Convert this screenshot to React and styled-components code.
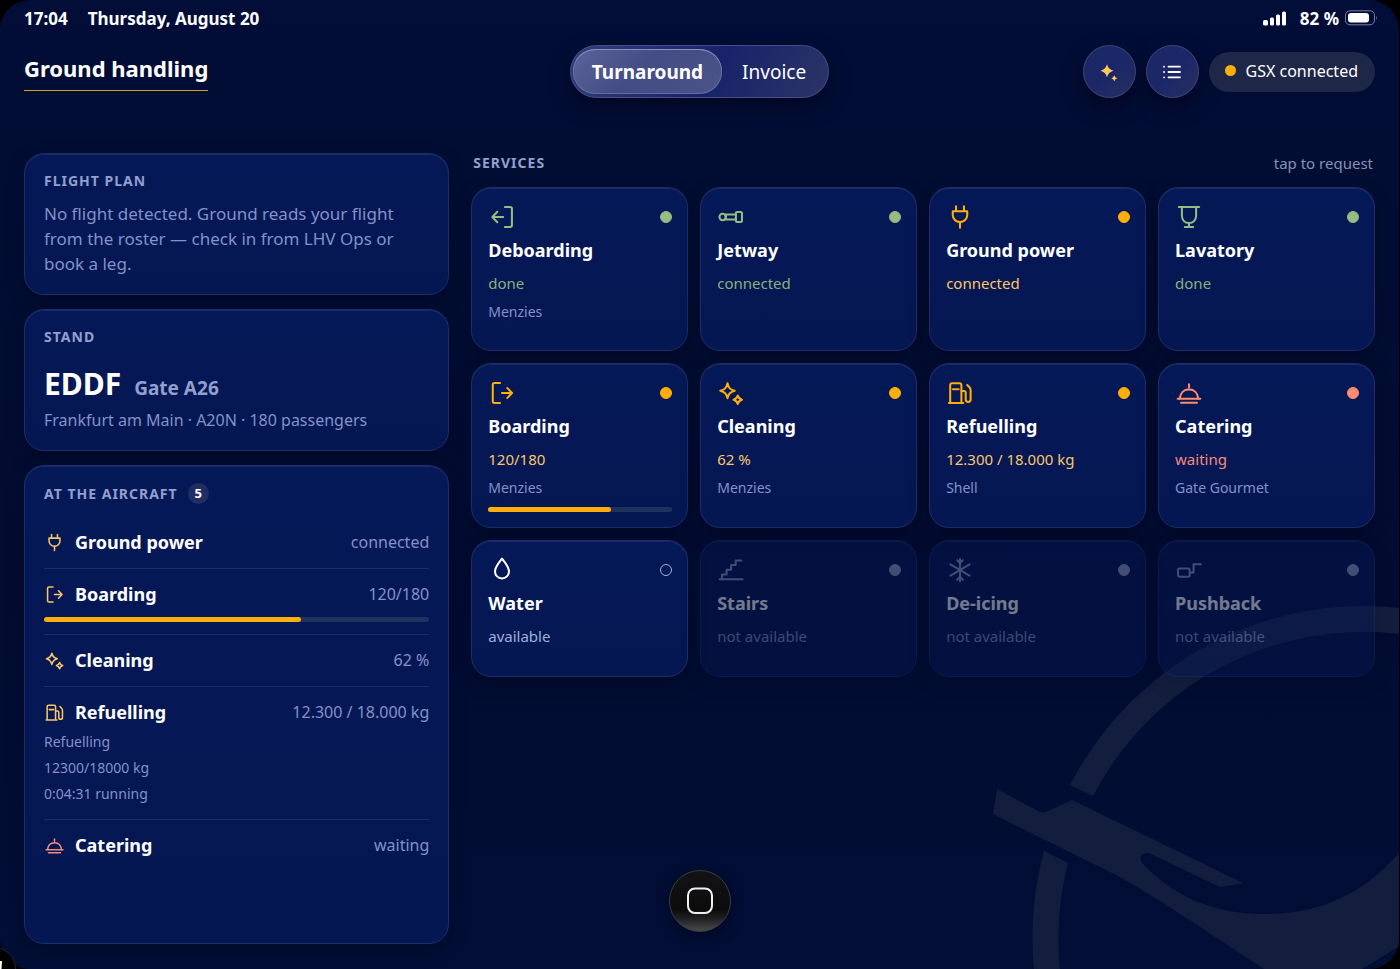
import React, { useState } from 'react';
import styled, { createGlobalStyle, css } from 'styled-components';

const tones = {
  done: { icon: '#97bb80', text: '#8ab07c' },
  active: { icon: '#ffae0a', text: '#f9c767' },
  waiting: { icon: '#ff8b70', text: '#f48b7c' },
  idle: { icon: '#ffffff', text: '#a3afdb' },
  off: { icon: '#8f9cc6', text: '#8291c6' },
};

const icons = {
  deboarding: (
    <>
      <path d="M14.5 3.4H19a1.5 1.5 0 0 1 1.5 1.5v14.2a1.5 1.5 0 0 1-1.5 1.5h-4.5" />
      <path d="M13 12H3.7M8 7.5 3.7 12 8 16.5" />
    </>
  ),
  boarding: (
    <>
      <path d="M10.3 3.4H5.6a1.5 1.5 0 0 0-1.5 1.5v14.2a1.5 1.5 0 0 0 1.5 1.5h4.7" />
      <path d="M12 12h8.5M16.6 7.8l4 4.2-4 4.2" />
    </>
  ),
  jetway: (
    <>
      <circle cx="4.8" cy="12" r="2.7" />
      <path d="M6.6 9.8h9.6M6.6 14.2h9.6M7.6 10v4" />
      <rect x="16.2" y="7.8" width="5.2" height="8.4" rx="1" />
    </>
  ),
  power: (
    <>
      <path d="M8.6 2.9v4M15.4 2.9v4M5.8 7h12.4v3.2a6.2 6.2 0 0 1-12.4 0z" />
      <path d="M12 16.4v4.8" />
    </>
  ),
  lavatory: (
    <>
      <path d="M3.3 3.4h17.4" />
      <path d="M5.9 3.6v6.8c0 4.2 2.6 6.8 6.1 6.8s6.1-2.6 6.1-6.8V3.6" />
      <path d="M12 17.2v3.2M8.4 20.5h7.2" />
    </>
  ),
  cleaning: (
    <>
      <path d="M9 3.7c.9 4 2.3 5.4 6.2 6.4-3.9 1-5.3 2.4-6.2 6.4-.9-4-2.3-5.4-6.2-6.4 3.9-1 5.3-2.4 6.2-6.4z" />
      <path d="M17.8 14.2c.6 2.2 1.4 3 3.6 3.6-2.2.6-3 1.4-3.6 3.6-.6-2.2-1.4-3-3.6-3.6 2.2-.6 3-1.4 3.6-3.6z" />
    </>
  ),
  fuel: (
    <>
      <path d="M3.6 20.5V5.2a1.6 1.6 0 0 1 1.6-1.6h6.4a1.6 1.6 0 0 1 1.6 1.6v15.3M2.5 20.6h12.3M6 8.7h4.9" />
      <path d="M13.3 10.2h2a1.6 1.6 0 0 1 1.6 1.6v5.8a2.1 2.1 0 0 0 4.2 0V9.4c0-1-.3-1.6-1-2.3l-1.9-1.9" />
    </>
  ),
  catering: (
    <>
      <path d="M2.3 16.9h19.4M5.2 20.4h13.6M12 4.5v2.6" />
      <path d="M4 16.8C4.5 12 7.6 8.9 12 8.9s7.5 3.1 8 7.9" />
    </>
  ),
  water: <path d="M12 2.3c3.2 4.1 6 7.3 6 10.9a6 6 0 0 1-12 0c0-3.6 2.8-6.8 6-10.9z" />,
  stairs: <path d="M2.3 19.9h19.6M4.3 19.7v-3.9h3.9v-4h3.9v-4H16v-4h4.9" />,
  deicing: (
    <>
      <path d="M12 2.6v18.8M3.8 7.2l16.4 9.6M20.2 7.2 3.8 16.8" />
      <path d="m9.6 3.7 2.4 2.4 2.4-2.4M9.6 20.3l2.4-2.4 2.4 2.4" />
    </>
  ),
  pushback: (
    <>
      <rect x="2.6" y="10.7" width="10" height="7" rx="1.2" />
      <path d="M12.7 14.2h3.2V7h6.2" />
    </>
  ),
};

const Icon = ({ name, size }) => (
  <svg
    width={size}
    height={size}
    viewBox="0 0 24 24"
    fill="none"
    stroke="currentColor"
    strokeWidth="1.75"
    strokeLinecap="round"
    strokeLinejoin="round"
    aria-hidden="true"
  >
    {icons[name]}
  </svg>
);

const services = [
  { name: 'Deboarding', icon: 'deboarding', tone: 'done', status: 'done', vendor: 'Menzies' },
  { name: 'Jetway', icon: 'jetway', tone: 'done', status: 'connected' },
  { name: 'Ground power', icon: 'power', tone: 'active', status: 'connected' },
  { name: 'Lavatory', icon: 'lavatory', tone: 'done', status: 'done' },
  { name: 'Boarding', icon: 'boarding', tone: 'active', status: '120/180', vendor: 'Menzies', progress: 66.6 },
  { name: 'Cleaning', icon: 'cleaning', tone: 'active', status: '62 %', vendor: 'Menzies' },
  { name: 'Refuelling', icon: 'fuel', tone: 'active', status: '12.300 / 18.000 kg', vendor: 'Shell' },
  { name: 'Catering', icon: 'catering', tone: 'waiting', status: 'waiting', vendor: 'Gate Gourmet' },
  { name: 'Water', icon: 'water', tone: 'idle', status: 'available' },
  { name: 'Stairs', icon: 'stairs', tone: 'off', status: 'not available' },
  { name: 'De-icing', icon: 'deicing', tone: 'off', status: 'not available' },
  { name: 'Pushback', icon: 'pushback', tone: 'off', status: 'not available' },
];

const activities = [
  { name: 'Ground power', icon: 'power', tone: 'active', status: 'connected' },
  { name: 'Boarding', icon: 'boarding', tone: 'active', status: '120/180', progress: 66.6 },
  { name: 'Cleaning', icon: 'cleaning', tone: 'active', status: '62 %' },
  {
    name: 'Refuelling',
    icon: 'fuel',
    tone: 'active',
    status: '12.300 / 18.000 kg',
    details: ['Refuelling', '12300/18000 kg', '0:04:31 running'],
  },
  { name: 'Catering', icon: 'catering', tone: 'waiting', status: 'waiting' },
];

const Progress = ({ value, label }) => (
  <Track role="progressbar" aria-label={label} aria-valuenow={Math.round(value)}>
    <Fill style={{ width: `${value}%` }} />
  </Track>
);

const ServiceCard = ({ service }) => (
  <Service type="button" disabled={service.tone === 'off'}>
    <ServiceTop $tone={service.tone}>
      <Icon name={service.icon} size={28} />
      <Dot $tone={service.tone} />
    </ServiceTop>
    <ServiceName>{service.name}</ServiceName>
    <ServiceStatus $tone={service.tone}>{service.status}</ServiceStatus>
    {service.vendor && <Vendor>{service.vendor}</Vendor>}
    {service.progress && <Progress value={service.progress} label={service.name} />}
  </Service>
);

const Activity = ({ item }) => (
  <ActivityItem>
    <ActivityLine>
      <ActivityIcon $tone={item.tone}>
        <Icon name={item.icon} size={21} />
      </ActivityIcon>
      <ActivityName>{item.name}</ActivityName>
      <ActivityStatus>{item.status}</ActivityStatus>
    </ActivityLine>
    {item.progress && <Progress value={item.progress} label={item.name} />}
    {item.details && (
      <Details>
        {item.details.map(line => <li key={line}>{line}</li>)}
      </Details>
    )}
  </ActivityItem>
);

const App = () => {
  const [tab, setTab] = useState('Turnaround');
  return (
    <Device>
      <GlobalStyle />
      <Screen>
        <Watermark viewBox="0 0 440 379" aria-hidden="true">
          <path d="M110 195A331 331 0 0 1 440 18V44A305 305 0 0 0 133 206Z" />
          <path d="M84 261 108 273A305 305 0 0 0 100 379H74A331 331 0 0 1 84 261Z" />
          <path d="M37 199 78 221Q83 224 88 221L112 210 283 293 260 297 189 263C180 262 178 269 184 275C215 308 258 324 302 324C360 324 402 305 440 262V356L402 379H304C240 337 190 303 156 285L33 224Z" />
        </Watermark>

        <StatusBar>
          <Clock>
            <span>17:04</span>
            <span>Thursday, August 20</span>
          </Clock>
          <Power>
            <svg width="24" height="15" viewBox="0 0 24 15" fill="#fff" aria-hidden="true">
              <rect x="0" y="9" width="5" height="5.5" rx="1.5" />
              <rect x="7" y="6.5" width="4" height="8" rx="1.5" />
              <rect x="13" y="3.5" width="4" height="11" rx="1.5" />
              <rect x="19" y="0.5" width="4" height="14" rx="1.5" />
            </svg>
            <Charge>82 %</Charge>
            <svg width="33" height="16" viewBox="0 0 33 16" aria-hidden="true">
              <rect x="0.5" y="0.8" width="29" height="14" rx="4.5" fill="none" stroke="#7880a0" />
              <rect x="3" y="3" width="21" height="9.5" rx="3" fill="#fff" />
              <path d="M31.3 5.5q1.5 2.3 0 4.6z" fill="#7880a0" />
            </svg>
          </Power>
        </StatusBar>

        <Header>
          <Title>Ground handling</Title>
          <Tabs role="tablist">
            {['Turnaround', 'Invoice'].map(name => (
              <Tab
                key={name}
                type="button"
                role="tab"
                aria-selected={tab === name}
                $active={tab === name}
                onClick={() => setTab(name)}
              >
                {name}
              </Tab>
            ))}
          </Tabs>
          <Actions>
            <RoundButton type="button" aria-label="Assistant">
              <svg width="22" height="22" viewBox="0 0 22 22" fill="#ffcb57" aria-hidden="true">
                <path d="M9 3.2q1.3 5.2 6.5 6.5-5.2 1.3-6.5 6.5-1.3-5.2-6.5-6.5Q7.7 8.4 9 3.2z" />
                <path d="M16.3 14.2q.7 2.3 3 3-2.3.7-3 3-.7-2.3-3-3 2.3-.7 3-3z" />
              </svg>
            </RoundButton>
            <RoundButton type="button" aria-label="List">
              <svg width="20" height="16" viewBox="0 0 20 16" stroke="#fff" strokeWidth="1.8" strokeLinecap="round" aria-hidden="true">
                <path d="M6.5 2.7H18M6.5 8H18M6.5 13.3H18M2 2.7h.1M2 8h.1M2 13.3h.1" />
              </svg>
            </RoundButton>
            <Connection>
              <ConnectionDot />
              GSX connected
            </Connection>
          </Actions>
        </Header>

        <Main>
          <Side>
            <Card>
              <Label>FLIGHT PLAN</Label>
              <Notice>
                No flight detected. Ground reads your flight from the roster — check in from LHV Ops or book a leg.
              </Notice>
            </Card>
            <Card>
              <Label>STAND</Label>
              <Stand>
                <Airport>EDDF</Airport>
                <Gate>Gate A26</Gate>
              </Stand>
              <StandInfo>Frankfurt am Main · A20N · 180 passengers</StandInfo>
            </Card>
            <Card>
              <LabelRow>
                <Label>AT THE AIRCRAFT</Label>
                <Count>5</Count>
              </LabelRow>
              <Activities>
                {activities.map(item => <Activity key={item.name} item={item} />)}
              </Activities>
            </Card>
          </Side>

          <section>
            <SectionHead>
              <Label>SERVICES</Label>
              <Hint>tap to request</Hint>
            </SectionHead>
            <Grid>
              {services.map(service => <ServiceCard key={service.name} service={service} />)}
            </Grid>
          </section>
        </Main>

        <HomeButton type="button" aria-label="Home">
          <svg width="28" height="28" viewBox="0 0 28 28" fill="none" stroke="#f0eef2" strokeWidth="2" aria-hidden="true">
            <rect x="2" y="1.5" width="24" height="24.5" rx="7" />
          </svg>
        </HomeButton>
      </Screen>
      <CornerButton type="button" aria-label="Menu">
        <svg width="16" height="16" viewBox="0 0 16 16" fill="#fff" aria-hidden="true">
          <path d="M4 0h12l-1 16H1z" />
        </svg>
      </CornerButton>
    </Device>
  );
};

const GlobalStyle = createGlobalStyle`
  * {
    box-sizing: border-box;
  }

  body {
    margin: 0;
    background: #000;
    color: #fff;
    font-family: "Noto Sans", sans-serif;
  }

  button {
    font-family: inherit;
    color: inherit;
    cursor: pointer;
  }

  h1, h2, h3, p, ul {
    margin: 0;
    padding: 0;
  }

  ul {
    list-style: none;
  }
`;

const surface = css`
  background: linear-gradient(180deg, #051857, #051752);
  border: 1px solid #1d2d67;
  border-radius: 20px;
  box-shadow: inset 0 1px 0 #1b2b63, 0 6px 18px rgba(0, 3, 20, 0.3);
`;

const Device = styled.div`
  position: relative;
  overflow: hidden;
`;

const Screen = styled.div`
  position: relative;
  display: flex;
  flex-direction: column;
  min-height: 100vh;
  margin-right: 1px;
  padding: 0 24px 25px;
  overflow: hidden;
  border-radius: 30px;
  background: linear-gradient(180deg, #020d38 0%, #020d33 20%, #020c31 60%, #020e36 100%);
`;

const Watermark = styled.svg`
  position: absolute;
  right: -1px;
  bottom: 0;
  width: 440px;
  fill: #131e3f;
`;

const StatusBar = styled.div`
  display: flex;
  justify-content: space-between;
  align-items: center;
  height: 36px;
  margin-right: -3px;
  font-size: 17px;
  font-weight: 700;
`;

const Clock = styled.div`
  display: flex;
  gap: 20px;
`;

const Power = styled.div`
  display: flex;
  align-items: center;
`;

const Charge = styled.span`
  margin: 0 6px 0 13px;
`;

const Header = styled.header`
  display: grid;
  grid-template-columns: 1fr auto 1fr;
  align-items: center;
  margin: 9px 0 55px;
`;

const Title = styled.h1`
  justify-self: start;
  padding-bottom: 6px;
  border-bottom: 1px solid #d99a1f;
  font-size: 22px;
  line-height: 32px;
  font-weight: 700;
`;

const Tabs = styled.div`
  display: flex;
  padding: 3px 2px;
  border: 1px solid #454f85;
  border-radius: 27px;
  background: linear-gradient(120deg, #343f7c 0%, #18226a 55%, #2c3566 100%);
  box-shadow: 0 8px 20px rgba(0, 2, 15, 0.5);
`;

const Tab = styled.button`
  height: 45px;
  padding: 0 ${props => (props.$active ? '19px' : '20px')};
  border: 0;
  border-radius: 23px;
  background: none;
  font-size: 19px;
  font-weight: 400;

  ${props => props.$active && css`
    background: linear-gradient(135deg, #5c649b, #434c84 45%, #4b5388);
    box-shadow: inset 0 1px 0 #8890bb, inset 0 0 0 1px #626b9f;
    font-weight: 700;
  `}
`;

const Actions = styled.div`
  display: flex;
  justify-content: flex-end;
  align-items: center;
  gap: 10px;
`;

const RoundButton = styled.button`
  display: flex;
  justify-content: center;
  align-items: center;
  width: 53px;
  height: 53px;
  padding: 0;
  border: 1px solid #3f4978;
  border-radius: 50%;
  background: linear-gradient(135deg, #1b2766, #1c2769 50%, #26305f);
  box-shadow: 0 8px 20px rgba(0, 2, 15, 0.5);
`;

const Connection = styled.div`
  display: flex;
  align-items: center;
  gap: 10px;
  height: 40px;
  padding: 0 17px 2px 16px;
  border-radius: 20px;
  background: #1e2747;
  font-size: 16px;
`;

const ConnectionDot = styled.span`
  width: 11px;
  height: 11px;
  border-radius: 50%;
  background: #ffae0a;
`;

const Main = styled.main`
  flex: 1;
  display: grid;
  grid-template-columns: minmax(0, 8fr) minmax(0, 17fr);
  gap: 22px;
`;

const Side = styled.aside`
  display: grid;
  grid-template-rows: auto auto 1fr;
  gap: 14px;
`;

const Card = styled.section`
  ${surface}
  padding: 17px 19px 18px;
`;

const Label = styled.h2`
  color: #92a0cf;
  font-size: 14px;
  line-height: 20px;
  font-weight: 700;
  letter-spacing: 1px;
`;

const Notice = styled.p`
  margin-top: 10px;
  color: #8392c8;
  font-size: 17px;
  line-height: 25px;
`;

const Stand = styled.div`
  display: flex;
  align-items: baseline;
  gap: 13px;
  margin-top: 17px;
  line-height: 40px;
`;

const Airport = styled.strong`
  font-size: 30px;
  font-weight: 700;
`;

const Gate = styled.span`
  color: #92a0cf;
  font-size: 19px;
  font-weight: 700;
`;

const StandInfo = styled.p`
  color: #8392c8;
  font-size: 16px;
  line-height: 24px;
`;

const LabelRow = styled.div`
  display: flex;
  align-items: center;
  gap: 10px;
`;

const Count = styled.span`
  width: 21px;
  height: 21px;
  border-radius: 50%;
  background: #202e63;
  color: #fff;
  font-size: 13px;
  line-height: 21px;
  font-weight: 700;
  text-align: center;
`;

const Activities = styled.ul`
  margin-top: 13px;
`;

const ActivityItem = styled.li`
  padding: 11px 0 12px;

  & + & {
    border-top: 1px solid #1d2d67;
  }
`;

const ActivityLine = styled.div`
  display: flex;
  align-items: center;
  line-height: 28px;
`;

const ActivityIcon = styled.span`
  display: flex;
  margin-right: 10px;
  color: ${props => tones[props.$tone].text};
`;

const ActivityName = styled.h3`
  flex: 1;
  font-size: 18px;
  font-weight: 700;
`;

const ActivityStatus = styled.span`
  color: #8392c8;
  font-size: 16px;
`;

const Details = styled.ul`
  margin-top: 3px;
  color: #8392c8;
  font-size: 14px;
  line-height: 26px;
`;

const Track = styled.div`
  width: 100%;
  height: 5px;
  margin-top: 9px;
  border-radius: 3px;
  background: #20305f;
`;

const Fill = styled.div`
  height: 100%;
  border-radius: 3px;
  background: #ffae0a;
`;

const SectionHead = styled.div`
  display: flex;
  justify-content: space-between;
  margin-bottom: 14px;
  padding: 0 2px;
`;

const Hint = styled.span`
  color: #8392b8;
  font-size: 15px;
  line-height: 20px;
`;

const Grid = styled.div`
  display: grid;
  grid-template-columns: repeat(4, minmax(0, 1fr));
  grid-template-rows: minmax(164px, auto) minmax(164px, auto) minmax(137px, auto);
  gap: 12px;
`;

const Service = styled.button`
  ${surface}
  display: flex;
  flex-direction: column;
  align-items: flex-start;
  padding: 15px 15px 15px 16px;
  text-align: left;

  &:disabled {
    opacity: 0.45;
    cursor: default;
  }
`;

const ServiceTop = styled.div`
  display: flex;
  justify-content: space-between;
  align-items: center;
  width: 100%;
  color: ${props => tones[props.$tone].icon};
`;

const Dot = styled.span`
  width: 12px;
  height: 12px;
  border: 1px solid ${props => (props.$tone === 'idle' ? '#a3afdb' : 'currentColor')};
  border-radius: 50%;
  background: ${props => (props.$tone === 'idle' ? 'none' : 'currentColor')};
`;

const ServiceName = styled.h3`
  margin-top: 6px;
  font-size: 18px;
  line-height: 26px;
  font-weight: 700;
`;

const ServiceStatus = styled.span`
  margin-top: 9px;
  color: ${props => tones[props.$tone].text};
  font-size: 15px;
  line-height: 22px;
`;

const Vendor = styled.span`
  margin-top: 8px;
  color: #8392c8;
  font-size: 14px;
  line-height: 20px;
`;

const HomeButton = styled.button`
  position: absolute;
  left: 50%;
  bottom: 37px;
  display: flex;
  justify-content: center;
  align-items: center;
  width: 62px;
  height: 62px;
  padding: 0;
  border: 1px solid #3a3c42;
  border-radius: 50%;
  background: linear-gradient(180deg, #131315 0%, #0c0c0d 65%, #1e1e20 78%, #4a4a4c 100%);
  box-shadow: 0 4px 14px rgba(0, 0, 0, 0.4);
  transform: translateX(-50%);
`;

const CornerButton = styled.button`
  position: absolute;
  left: -28px;
  bottom: -22px;
  display: flex;
  justify-content: center;
  align-items: center;
  width: 44px;
  height: 44px;
  padding: 0;
  border: 1px solid #24262c;
  border-radius: 50%;
  background: #000;
`;

export default App;
